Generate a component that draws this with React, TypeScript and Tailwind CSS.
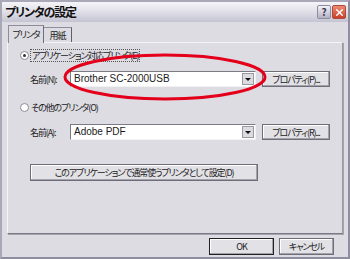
import { X } from "lucide-react";

const font = {
  fontFamily: '"Noto Sans CJK JP", "Liberation Sans", sans-serif',
};

// small dialog text, proportional kana like the old UI font
const txt =
  "whitespace-nowrap text-[9px] leading-none tracking-[-1.1px] text-[#222] [font-feature-settings:'palt']";

const Radio = ({ checked }: { checked?: boolean }) => (
  <span className="flex h-[9px] w-[9px] shrink-0 items-center justify-center rounded-full border border-[#8d8c96] bg-white">
    {checked && <span className="h-[3px] w-[3px] rounded-full bg-[#333]" />}
  </span>
);

const Combo = ({ value }: { value: string }) => (
  <div className="flex h-[16px] w-[186px] shrink-0 items-center border border-t-[#7b7a85] border-l-[#7b7a85] border-b-[#f2f2f5] border-r-[#f2f2f5] bg-white">
    <span
      className="flex-1 whitespace-nowrap pl-[3px] text-[10px] leading-none text-[#1a1a1a]"
      style={{ fontFamily: '"Liberation Sans", sans-serif' }}
    >
      {value}
    </span>
    <span className="mr-[1px] flex h-[12px] w-[12px] items-center justify-center border border-[#9a99a3] bg-[#dcdbe0]">
      <span className="h-0 w-0 border-l-[3px] border-r-[3px] border-t-[3px] border-l-transparent border-r-transparent border-t-[#111]" />
    </span>
  </div>
);

const Btn = ({
  label,
  className = "",
}: {
  label: string;
  className?: string;
}) => (
  <button
    className={`flex h-[16px] shrink-0 items-center justify-center border border-[#6e6d78] bg-[#e2e1e6] shadow-[inset_-1px_-1px_0_#a3a2ab,inset_1px_1px_0_#fff] ${txt} ${className}`}
  >
    {label}
  </button>
);

export default function App() {
  return (
    <div
      className="relative flex h-[259px] w-[350px] flex-col overflow-hidden border-2 border-[#a9a8b8] border-b-[#8f8ea0] border-r-[#8f8ea0] bg-[#dddce2]"
      style={font}
    >
      {/* TITLE BAR */}
      <div className="flex h-[20px] shrink-0 items-center justify-between bg-gradient-to-b from-[#f4f4f8] via-[#e0dfe8] to-[#c4c3d2] pl-[3px] pr-[2px]">
        <span className="whitespace-nowrap text-[12px] font-bold leading-none tracking-[-1.2px] text-[#111] [font-feature-settings:'palt']">
          プリンタの設定
        </span>
        <div className="flex gap-[1px]">
          <span className="flex h-[14px] w-[14px] items-center justify-center rounded-[2px] border border-[#8e8da0] bg-gradient-to-b from-[#f2f2f7] to-[#b3b2c4] text-[10px] font-bold leading-none text-[#3b3b55]">
            ?
          </span>
          <span className="flex h-[14px] w-[14px] items-center justify-center rounded-[2px] border border-[#b04a3a] bg-gradient-to-b from-[#ec8a72] to-[#c8402a]">
            <X className="h-[11px] w-[11px] text-white" strokeWidth={3} />
          </span>
        </div>
      </div>

      <div className="flex flex-1 flex-col px-[5px] pt-[2px]">
        {/* TABS */}
        <div className="flex h-[18px] shrink-0 items-end pl-[1px]">
          <div className={`z-10 -mb-px flex h-[18px] w-[36px] items-center justify-center border border-b-0 border-[#8e8d99] border-r-[#6f6e7a] bg-[#dddce2] ${txt}`}>
            プリンタ
          </div>
          <div className={`flex h-[15px] w-[28px] items-center justify-center border border-b-0 border-l-0 border-[#8e8d99] border-r-[#5f5e6a] bg-[#dddce2] ${txt}`}>
            用紙
          </div>
        </div>

        {/* PANEL */}
        <div className="flex h-[192px] shrink-0 flex-col border border-[#f4f4f7] border-b-[#7a7985] border-r-[#9a99a4] px-[12px] pt-[5px] shadow-[1px_1px_0_#a5a4ae]">
          <div className="flex h-[14px] items-center gap-[1px]">
            <Radio checked />
            <span className={`border border-dotted border-[#555] px-[1px] py-[1px] ${txt}`}>
              アプリケーション対応プリンタ(E)
            </span>
          </div>

          <div className="mt-[9px] flex items-center pl-[10px]">
            <span className={`w-[42px] ${txt}`}>名前(N):</span>
            <Combo value="Brother SC-2000USB" />
            <Btn label="プロパティ(P)..." className="ml-[6px] w-[68px]" />
          </div>

          <div className="mt-[13px] flex h-[14px] items-center gap-[2px]">
            <Radio />
            <span className={txt}>その他のプリンタ(O)</span>
          </div>

          <div className="mt-[10px] flex items-center pl-[10px]">
            <span className={`w-[42px] ${txt}`}>名前(A):</span>
            <Combo value="Adobe PDF" />
            <Btn label="プロパティ(R)..." className="ml-[6px] w-[68px]" />
          </div>

          <div className="mt-[24px] pl-[10px]">
            <Btn
              label="このアプリケーションで通常使うプリンタとして設定(D)"
              className="h-[17px] w-[228px]"
            />
          </div>
        </div>

        {/* FOOTER */}
        <div className="mt-[4px] flex justify-end gap-[5px] pr-[9px]">
          <Btn label="OK" className="h-[17px] w-[65px] border-[1.5px] border-[#222]" />
          <Btn label="キャンセル" className="h-[17px] w-[55px]" />
        </div>
      </div>

      {/* RED HIGHLIGHT */}
      <svg
        className="pointer-events-none absolute left-0 top-0"
        width="350"
        height="259"
      >
        <ellipse
          cx="163"
          cy="75"
          rx="100"
          ry="22"
          fill="none"
          stroke="#e4001b"
          strokeWidth="3"
        />
      </svg>
    </div>
  );
}
